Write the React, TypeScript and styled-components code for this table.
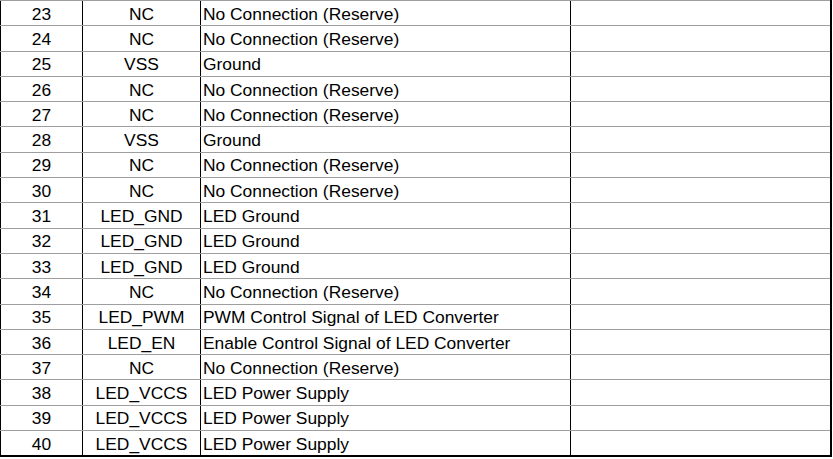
import React from "react";
import styled, { createGlobalStyle } from "styled-components";

const GlobalStyle = createGlobalStyle`
  html, body {
    margin: 0;
    padding: 0;
    background: #ffffff;
  }
  body {
    font-family: "Liberation Sans", Arial, sans-serif;
  }
`;

const Sheet = styled.div`
  width: 832px;
  box-sizing: border-box;
  font-family: "Liberation Sans", Arial, sans-serif;
  font-size: 17.4px;
  color: #000;
  border-right: 2px solid #000;
  border-bottom: 2px solid #000;
`;

const Row = styled.div`
  display: grid;
  grid-template-columns: 82px 118px 370px 260px;
  height: 25.3px;
  box-sizing: border-box;
  border-top: 1px solid #9e9e9e;
`;

const Cell = styled.div<{ $align?: "left" | "center" }>`
  display: flex;
  align-items: center;
  justify-content: ${(p) => (p.$align === "left" ? "flex-start" : "center")};
  padding-left: ${(p) => (p.$align === "left" ? "2px" : "0")};
  padding-top: 1px;
  border-left: 1px solid #000;
  white-space: nowrap;
  overflow: hidden;
  line-height: 20px;
`;

type Pin = { no: number; sym: string; desc: string };

const pins: Pin[] = [
  { no: 23, sym: "NC", desc: "No Connection (Reserve)" },
  { no: 24, sym: "NC", desc: "No Connection (Reserve)" },
  { no: 25, sym: "VSS", desc: "Ground" },
  { no: 26, sym: "NC", desc: "No Connection (Reserve)" },
  { no: 27, sym: "NC", desc: "No Connection (Reserve)" },
  { no: 28, sym: "VSS", desc: "Ground" },
  { no: 29, sym: "NC", desc: "No Connection (Reserve)" },
  { no: 30, sym: "NC", desc: "No Connection (Reserve)" },
  { no: 31, sym: "LED_GND", desc: "LED Ground" },
  { no: 32, sym: "LED_GND", desc: "LED Ground" },
  { no: 33, sym: "LED_GND", desc: "LED Ground" },
  { no: 34, sym: "NC", desc: "No Connection (Reserve)" },
  { no: 35, sym: "LED_PWM", desc: "PWM Control Signal of LED Converter" },
  { no: 36, sym: "LED_EN", desc: "Enable Control Signal of LED Converter" },
  { no: 37, sym: "NC", desc: "No Connection (Reserve)" },
  { no: 38, sym: "LED_VCCS", desc: "LED Power Supply" },
  { no: 39, sym: "LED_VCCS", desc: "LED Power Supply" },
  { no: 40, sym: "LED_VCCS", desc: "LED Power Supply" },
];

export default function App() {
  return (
    <>
      <GlobalStyle />
      <Sheet>
        {pins.map((p) => (
          <Row key={p.no}>
            <Cell>{p.no}</Cell>
            <Cell>{p.sym}</Cell>
            <Cell $align="left">{p.desc}</Cell>
            <Cell $align="left" />
          </Row>
        ))}
      </Sheet>
    </>
  );
}
